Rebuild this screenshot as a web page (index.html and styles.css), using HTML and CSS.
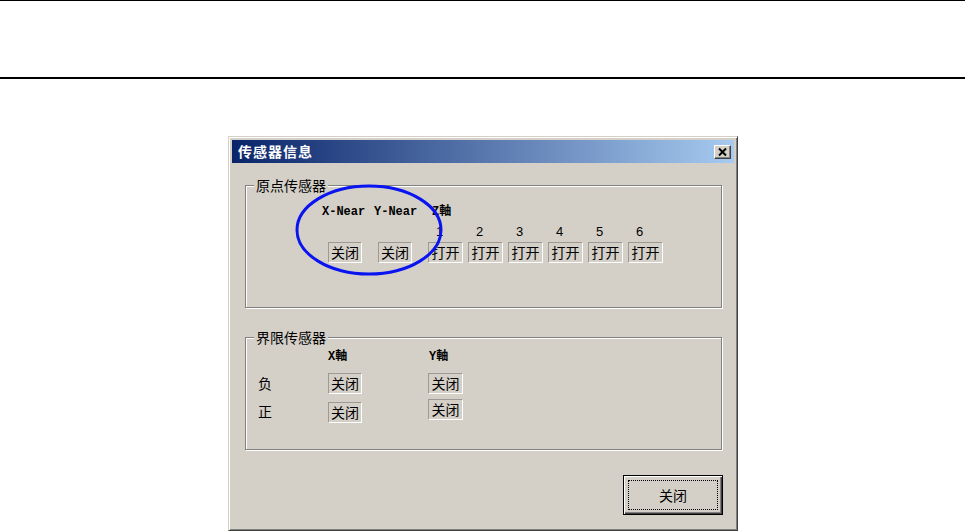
FILE: index.html
```html
<!DOCTYPE html>
<html lang="zh">
<head>
    <meta charset="UTF-8">
    <meta name="viewport" content="width=device-width, initial-scale=1.0">
    <title>传感器信息</title>
    <link rel="stylesheet" href="styles.css">
</head>
<body>
    <div class="rule rule-top"></div>
    <div class="rule rule-mid"></div>

    <div class="dialog">
        <div class="titlebar">
            <span class="title">传感器信息</span>
            <span class="close-x">
                <svg width="15" height="12" viewBox="0 0 15 12">
                    <path d="M4 2.5 L11 9.5 M11 2.5 L4 9.5" stroke="#000" stroke-width="2" fill="none"/>
                </svg>
            </span>
        </div>

        <fieldset class="group group-origin">
            <legend>原点传感器</legend>
            <div class="head-row">
                <span class="head h-xnear">X-Near</span><span class="head h-ynear">Y-Near</span><span class="head">Z軸</span>
            </div>
            <div class="num-row">
                <span>1</span><span>2</span><span>3</span><span>4</span><span>5</span><span>6</span>
            </div>
            <div class="box-row">
                <span class="box box-near">关闭</span>
                <span class="box box-near">关闭</span>
                <span class="box">打开</span>
                <span class="box">打开</span>
                <span class="box">打开</span>
                <span class="box">打开</span>
                <span class="box">打开</span>
                <span class="box">打开</span>
            </div>
        </fieldset>

        <fieldset class="group group-limit">
            <legend>界限传感器</legend>
            <div class="head-row limit-head">
                <span class="head h-xaxis">X軸</span><span class="head">Y軸</span>
            </div>
            <div class="limit-row row-neg">
                <span class="side">负</span>
                <span class="box box-near">关闭</span>
                <span class="box box-y">关闭</span>
            </div>
            <div class="limit-row row-pos">
                <span class="side">正</span>
                <span class="box box-near">关闭</span>
                <span class="box box-y">关闭</span>
            </div>
        </fieldset>

        <button class="close-btn"><span class="focus">关闭</span></button>

        <svg class="mark" width="150" height="92" viewBox="0 0 150 92">
            <ellipse cx="75" cy="46" rx="72" ry="44" stroke="#0a14f0" stroke-width="3" fill="none"/>
        </svg>
    </div>
</body>
</html>
```

FILE: styles.css
```css
body{
    margin: 0;
    background: #fff;
    font-family: "Noto Sans CJK SC", sans-serif;
    font-size: 14px;
    color: #000;
}
.rule{
    background: #000;
}
.rule-top{
    height: 1px;
}
.rule-mid{
    height: 2px;
    margin-top: 76px;
}

/* window */
.dialog{
    position: relative;
    width: 510px;
    height: 395px;
    box-sizing: border-box;
    margin: 57px 0 0 228px;
    padding: 3px;
    background: #d4d0c8;
    border: 1px solid;
    border-color: #d4d0c8 #404040 #404040 #d4d0c8;
    box-shadow: inset 1px 1px #fff, inset -1px -1px #808080;
}
.titlebar{
    height: 23px;
    display: flex;
    align-items: center;
    justify-content: space-between;
    padding: 0 3px 0 6px;
    background: linear-gradient(to right, #0a246a, #a6caf0);
}
.title{
    color: #fff;
    font-weight: bold;
    font-size: 14px;
    line-height: 23px;
    letter-spacing: 1px;
}
.close-x{
    width: 17px;
    height: 14px;
    box-sizing: border-box;
    display: flex;
    align-items: center;
    justify-content: center;
    background: #d4d0c8;
    border: 1px solid;
    border-color: #fff #404040 #404040 #fff;
    box-shadow: inset -1px -1px #808080;
}

/* group boxes */
.group{
    margin: 14px 12px 0 13px;
    padding: 0;
    min-width: 0;
    border: 1px solid #808080;
    box-shadow: inset 1px 1px #fff, 1px 1px #fff;
}
.group legend{
    margin-left: 8px;
    padding: 0 2px;
    line-height: 16px;
    background: #d4d0c8;
}
.group-origin{
    padding-bottom: 44px;
}
.group-limit{
    margin-top: 21px;
    padding-bottom: 26px;
}

.head-row{
    height: 16px;
    margin-top: 11px;
    padding-left: 76px;
    display: flex;
    align-items: center;
}
.head{
    font-family: "Liberation Mono", "Noto Sans CJK SC", monospace;
    font-weight: bold;
    font-size: 12px;
    line-height: 16px;
}
.h-xnear{
    width: 52px;
}
.h-ynear{
    width: 58px;
}
.num-row{
    height: 16px;
    margin-top: 4px;
    padding-left: 190px;
    display: flex;
    font-family: "Liberation Sans", sans-serif;
    font-size: 13px;
    line-height: 16px;
}
.num-row span{
    width: 40px;
}
.box-row{
    height: 21px;
    margin-top: 2px;
    padding-left: 82px;
    display: flex;
    gap: 5px;
}

.box{
    width: 35px;
    height: 21px;
    box-sizing: border-box;
    border: 1px solid;
    border-color: #9c9a94 #fff #fff #9c9a94;
    text-align: center;
    line-height: 19px;
    font-size: 14px;
    white-space: nowrap;
}
.box-near{
    width: 34px;
    margin-right: 11px;
}

/* limit group */
.limit-head{
    margin-top: 4px;
    padding-left: 82px;
}
.h-xaxis{
    width: 101px;
}
.limit-row{
    display: flex;
    align-items: flex-start;
    padding-left: 12px;
}
.row-neg{
    height: 21px;
    margin-top: 8px;
}
.row-pos{
    height: 24px;
    margin-top: 5px;
}
.side{
    width: 70px;
    line-height: 21px;
}
.row-pos .side{
    margin-top: 2px;
}
.row-pos .box-near{
    margin-top: 3px;
}
.limit-row .box-near{
    margin-right: 0;
}
.box-y{
    margin-left: 66px;
}

/* default push button */
.close-btn{
    display: block;
    width: 100px;
    height: 40px;
    margin: 25px 11px 0 auto;
    padding: 4px;
    box-sizing: border-box;
    background: #d4d0c8;
    border: 1px solid #000;
    box-shadow: inset 1px 1px #fff, inset -1px -1px #404040, inset -2px -2px #808080;
    font-family: "Noto Sans CJK SC", sans-serif;
    font-size: 14px;
    color: #000;
}
.focus{
    display: flex;
    height: 100%;
    align-items: center;
    justify-content: center;
    box-sizing: border-box;
    border: 1px dotted #000;
}

/* hand-drawn mark over the near sensors */
.mark{
    position: absolute;
    left: 65px;
    top: 47px;
}
```
